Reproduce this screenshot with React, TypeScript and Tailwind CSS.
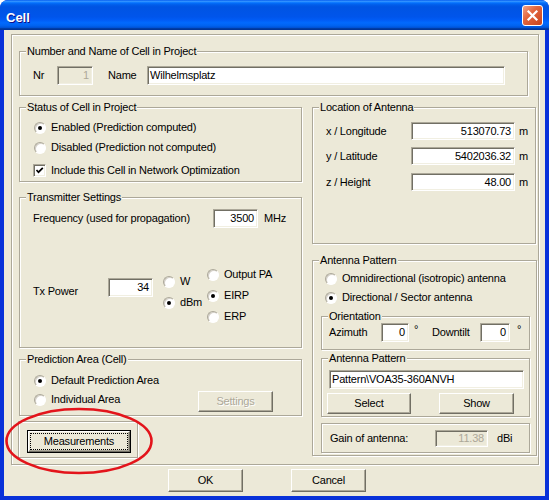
import React from "react";

const etched = "border border-[#ACA899] shadow-[inset_1px_1px_0_#fff,1px_1px_0_#fff]";
const raised =
  "border border-t-white border-l-white border-b-[#716F64] border-r-[#716F64] shadow-[inset_-1px_-1px_0_#ACA899]";
const sunken =
  "border border-t-[#ACA899] border-l-[#ACA899] border-b-white border-r-white shadow-[inset_1px_1px_0_#716F64,inset_-1px_-1px_0_#F1EFE2]";

function Group({ label, className, children }: { label?: string; className?: string; children?: React.ReactNode }) {
  return (
    <div className={`relative shrink-0 ${etched} ${className ?? ""}`}>
      {label && (
        <span className="absolute left-[6px] top-[-7px] whitespace-nowrap bg-[#ECE9D8] px-[1px] leading-[13px]">
          {label}
        </span>
      )}
      {children}
    </div>
  );
}

function Field({
  value,
  className,
  left,
  disabled,
}: {
  value: string;
  className?: string;
  left?: boolean;
  disabled?: boolean;
}) {
  return (
    <div
      className={`flex shrink-0 items-center leading-[13px] ${sunken} ${
        disabled ? "bg-[#ECE9D8] text-[#ACA899]" : "bg-white"
      } ${left ? "pl-[2px]" : "justify-end pr-[3px]"} ${className ?? ""}`}
    >
      {value}
    </div>
  );
}

function Btn({ children, className, disabled }: { children: React.ReactNode; className?: string; disabled?: boolean }) {
  return (
    <button
      type="button"
      className={`flex shrink-0 items-center justify-center bg-[#ECE9D8] leading-[13px] ${raised} ${
        disabled ? "text-[#ACA899] [text-shadow:1px_1px_0_#fff]" : ""
      } ${className ?? ""}`}
    >
      {children}
    </button>
  );
}

function Radio({ checked }: { checked?: boolean }) {
  return (
    <span className="flex w-[13px] shrink-0 justify-end">
      <span className="flex h-[12px] w-[12px] items-center justify-center rounded-full border border-t-[#ACA899] border-l-[#ACA899] border-b-white border-r-white bg-white shadow-[inset_1px_1px_0_#D4D0C8]">
        {checked && <span className="h-[4px] w-[4px] rounded-full bg-black" />}
      </span>
    </span>
  );
}

function RadioRow({ label, checked, className }: { label: string; checked?: boolean; className?: string }) {
  return (
    <div className={`flex items-center gap-[5px] whitespace-nowrap leading-[13px] ${className ?? ""}`}>
      <Radio checked={checked} />
      <span>{label}</span>
    </div>
  );
}

function CheckRow({ label, className }: { label: string; className?: string }) {
  return (
    <div className={`flex items-center gap-[5px] whitespace-nowrap leading-[13px] ${className ?? ""}`}>
      <span className={`flex h-[13px] w-[13px] shrink-0 items-center justify-center bg-white ${sunken}`}>
        <svg width="9" height="9" viewBox="0 0 9 9">
          <polyline points="1.5,4 3.5,6.2 7.8,1.8" fill="none" stroke="#000" strokeWidth="1.7" />
        </svg>
      </span>
      <span>{label}</span>
    </div>
  );
}

export default function App() {
  return (
    <div className="relative flex h-[500px] w-[549px] flex-col overflow-hidden rounded-t-[8px] bg-[#0831D9] font-['Liberation_Sans',Arial,sans-serif] text-[11px] tracking-[-0.2px] text-black">
      {/* Title bar */}
      <div className="flex h-[30px] shrink-0 items-start justify-between bg-[linear-gradient(180deg,#0058EE_0%,#3593FF_4%,#288EFF_6%,#127DFF_8%,#036FFC_10%,#0262EE_14%,#0057E5_20%,#0054E3_24%,#0055EB_56%,#005BF5_66%,#026AFE_76%,#0062EF_86%,#0052D6_92%,#0040AB_94%,#003092_100%)] px-[6px]">
        <span className="mt-[10px] text-[13px] font-bold leading-[15px] tracking-normal text-white [text-shadow:1px_1px_0_#0F1089]">
          Cell
        </span>
        <div className="mt-[5px] flex h-[21px] w-[21px] items-center justify-center rounded-[3px] border border-white bg-[linear-gradient(135deg,#F2A388_0%,#E2663E_40%,#C9431C_100%)]">
          <svg width="13" height="13" viewBox="0 0 13 13">
            <path d="M2.5 2.5 L10.5 10.5 M10.5 2.5 L2.5 10.5" stroke="#fff" strokeWidth="2.2" strokeLinecap="square" />
          </svg>
        </div>
      </div>

      {/* Client area */}
      <div className="mx-[4px] mb-[4px] flex flex-1 flex-col bg-[#ECE9D8] px-[7px] pt-[4px]">
        <div className={`flex h-[431px] w-[528px] shrink-0 flex-col ${etched}`}>
          <Group label="Number and Name of Cell in Project" className="ml-[7px] mt-[16px] h-[45px] w-[509px]">
            <div className="flex items-center pl-[13px] pt-[14px]">
              <span className="w-[24px] leading-[13px]">Nr</span>
              <Field value="1" disabled className="h-[19px] w-[36px]" />
              <span className="ml-[15px] w-[39px] leading-[13px]">Name</span>
              <Field value="Wilhelmsplatz" left className="h-[19px] w-[358px]" />
            </div>
          </Group>

          <div className="ml-[7px] mt-[11px] flex items-start">
            {/* Left column */}
            <div className="flex w-[283px] flex-col items-start">
              <Group label="Status of Cell in Project" className="h-[75px] w-[283px]">
                <div className="flex flex-col pl-[13px] pt-[13px]">
                  <RadioRow checked label="Enabled (Prediction computed)" />
                  <RadioRow label="Disabled (Prediction not computed)" className="mt-[7px]" />
                  <CheckRow label="Include this Cell in Network Optimization" className="mt-[10px]" />
                </div>
              </Group>

              <Group label="Transmitter Settings" className="mt-[15px] h-[151px] w-[283px]">
                <div className="flex items-center pl-[13px] pt-[11px]">
                  <span className="w-[180px] whitespace-nowrap leading-[13px]">Frequency (used for propagation)</span>
                  <Field value="3500" className="h-[19px] w-[45px]" />
                  <span className="ml-[6px] leading-[13px]">MHz</span>
                </div>
                <div className="mt-[40px] flex items-start pl-[13px]">
                  <span className="mt-[17px] w-[75px] leading-[13px]">Tx Power</span>
                  <Field value="34" className="mt-[10px] h-[19px] w-[45px]" />
                  <div className="ml-[9px] mt-[7px] flex w-[44px] flex-col gap-[8px]">
                    <RadioRow label="W" />
                    <RadioRow checked label="dBm" />
                  </div>
                  <div className="flex flex-col gap-[8px]">
                    <RadioRow label="Output PA" />
                    <RadioRow checked label="EIRP" />
                    <RadioRow label="ERP" />
                  </div>
                </div>
              </Group>

              <Group label="Prediction Area (Cell)" className="mt-[11px] h-[57px] w-[283px]">
                <div className="flex flex-col pl-[13px] pt-[14px]">
                  <RadioRow checked label="Default Prediction Area" />
                  <div className="mt-[4px] flex items-start">
                    <RadioRow label="Individual Area" className="mt-[2px] w-[165px]" />
                    <Btn disabled className="h-[21px] w-[75px]">
                      Settings
                    </Btn>
                  </div>
                </div>
              </Group>

              <Group className="ml-[-1px] mt-[5px] h-[37px] w-[120px]">
                <div className="pl-[8px] pt-[8px]">
                  <button type="button" className="flex h-[23px] w-[104px] border border-black bg-[#ECE9D8] leading-[13px]">
                    <span className={`flex flex-1 ${raised}`}>
                      <span className="m-[1px] flex flex-1 items-center justify-center border border-dotted border-black">
                        Measurements
                      </span>
                    </span>
                  </button>
                </div>
              </Group>
            </div>

            {/* Right column */}
            <div className="ml-[10px] flex w-[225px] flex-col items-start">
              <Group label="Location of Antenna" className="h-[137px] w-[224px]">
                <div className="flex flex-col pl-[13px] pt-[14px]">
                  <div className="flex items-center">
                    <span className="w-[85px] leading-[13px]">x / Longitude</span>
                    <Field value="513070.73" className="h-[18px] w-[104px]" />
                    <span className="ml-[4px] leading-[13px]">m</span>
                  </div>
                  <div className="mt-[7px] flex items-center">
                    <span className="w-[85px] leading-[13px]">y / Latitude</span>
                    <Field value="5402036.32" className="h-[18px] w-[104px]" />
                    <span className="ml-[4px] leading-[13px]">m</span>
                  </div>
                  <div className="mt-[8px] flex items-center">
                    <span className="w-[85px] leading-[13px]">z / Height</span>
                    <Field value="48.00" className="h-[18px] w-[104px]" />
                    <span className="ml-[4px] leading-[13px]">m</span>
                  </div>
                </div>
              </Group>

              <Group label="Antenna Pattern" className="mt-[16px] h-[196px] w-[225px]">
                <div className="flex flex-col pt-[11px]">
                  <RadioRow label="Omnidirectional (isotropic) antenna" className="ml-[11px]" />
                  <RadioRow checked label="Directional / Sector antenna" className="ml-[11px] mt-[6px]" />

                  <Group label="Orientation" className="ml-[8px] mt-[12px] h-[34px] w-[209px]">
                    <div className="flex items-center pl-[7px] pt-[6px]">
                      <span className="w-[52px] leading-[13px]">Azimuth</span>
                      <Field value="0" className="h-[19px] w-[28px]" />
                      <span className="w-[23px] self-start pl-[5px] leading-[13px]">°</span>
                      <span className="w-[48px] leading-[13px]">Downtilt</span>
                      <Field value="0" className="h-[19px] w-[30px]" />
                      <span className="ml-[7px] self-start leading-[13px]">°</span>
                    </div>
                  </Group>

                  <Group label="Antenna Pattern" className="ml-[8px] mt-[8px] h-[59px] w-[209px]">
                    <Field value={"Pattern\\VOA35-360ANVH"} left className="ml-[7px] mt-[11px] h-[19px] w-[195px]" />
                    <div className="ml-[5px] mt-[4px] flex">
                      <Btn className="h-[21px] w-[84px]">Select</Btn>
                      <Btn className="ml-[28px] h-[21px] w-[75px]">Show</Btn>
                    </div>
                  </Group>

                  <Group className="ml-[8px] mt-[6px] h-[30px] w-[209px]">
                    <div className="flex h-full items-center pl-[8px]">
                      <span className="w-[105px] leading-[13px]">Gain of antenna:</span>
                      <Field value="11.38" disabled className="h-[17px] w-[53px]" />
                      <span className="ml-[9px] leading-[13px]">dBi</span>
                    </div>
                  </Group>
                </div>
              </Group>
            </div>
          </div>
        </div>

        <div className="mt-[4px] flex">
          <Btn className="ml-[157px] h-[23px] w-[75px]">OK</Btn>
          <Btn className="ml-[48px] h-[23px] w-[75px]">Cancel</Btn>
        </div>
      </div>

      {/* Annotation ellipse */}
      <svg className="pointer-events-none absolute left-[3px] top-[405px]" width="155" height="72" viewBox="0 0 155 72">
        <ellipse cx="76" cy="36" rx="72.5" ry="32" fill="none" stroke="#E3141B" strokeWidth="2.6" />
      </svg>
    </div>
  );
}
